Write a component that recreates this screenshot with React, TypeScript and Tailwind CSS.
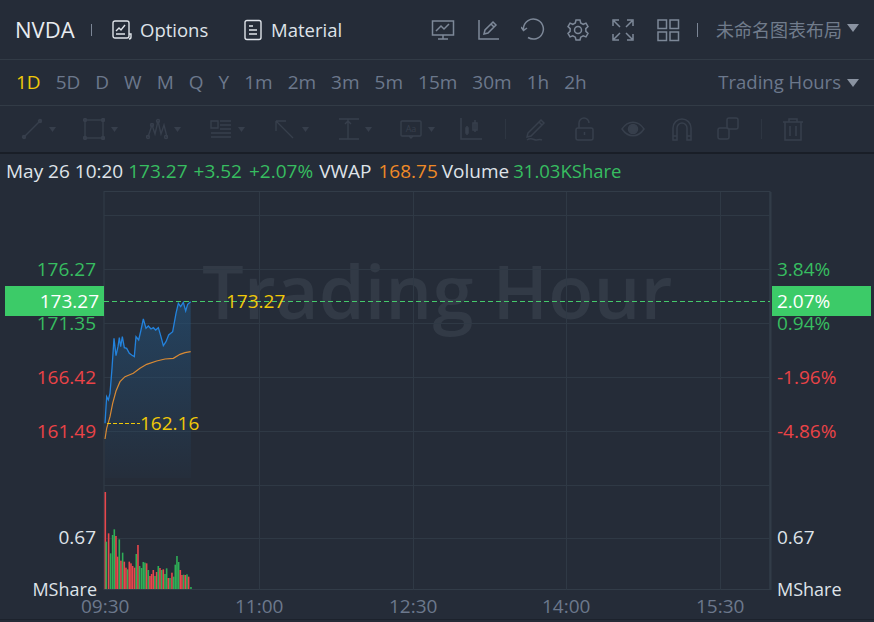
const periods = ["5D", "D", "W", "M", "Q", "Y", "1m", "2m", "3m", "5m", "15m", "30m", "1h", "2h"];

// traced from the chart, in 3x crop coordinates starting at (90, 285)
const pricePts = [[45,415],[50,335],[55,345],[60,325],[66,250],[72,160],[78,212],[84,185],[88,158],[92,185],[97,155],[103,188],[110,190],[118,205],[125,210],[133,215],[138,155],[146,165],[153,135],[160,102],[168,130],[175,123],[183,132],[190,128],[197,135],[205,128],[212,152],[220,182],[228,170],[236,150],[248,140],[258,85],[265,55],[272,65],[280,52],[287,78],[293,58],[302,50]];
const avgPts = [[45,462],[50,430],[60,395],[68,355],[78,318],[90,290],[105,275],[130,265],[150,250],[170,238],[200,228],[225,222],[250,220],[270,208],[285,203],[302,200]];

const toPage = (pts: number[][]) => pts.map(([x, y]) => `${90 + x / 3},${285 + y / 3}`).join(" ");

// [x, top, up?] in 3x crop coordinates starting at (90, 480)
const bars: [number, number, boolean][] = [[45,36,false],[48,185,true],[55,160,false],[61,220,true],[67,165,true],[72,148,true],[77,168,false],[82,230,false],[87,178,true],[92,242,false],[97,218,true],[102,245,false],[107,263,false],[112,268,true],[117,245,false],[122,250,false],[127,258,false],[133,263,false],[138,222,true],[143,195,false],[148,258,true],[154,264,true],[159,246,true],[164,248,true],[169,250,false],[174,270,true],[179,288,false],[184,282,false],[189,270,false],[194,288,true],[199,276,false],[204,258,true],[209,264,false],[214,270,true],[219,268,false],[224,282,true],[229,265,true],[234,294,false],[239,294,true],[245,278,false],[250,290,true],[255,254,true],[260,228,true],[265,246,true],[270,270,false],[275,285,false],[280,284,true],[285,285,false],[290,283,true],[295,290,false],[302,321,true]];

const hLines = [215, 269, 323, 377, 431, 485, 538];
const vLines = [259, 413, 566, 720];

const Caret = ({ className }: { className: string }) => (
  <svg width="12" height="8" viewBox="0 0 12 8" className={className}>
    <path d="M0 0h12L6 8z" fill="currentColor" />
  </svg>
);

const Tool = ({ children }: { children: React.ReactNode }) => (
  <svg width="24" height="24" viewBox="0 0 24 24" fill="none" stroke="currentColor" strokeWidth="1.5">
    {children}
  </svg>
);

const DrawTool = ({ children, className }: { children: React.ReactNode; className: string }) => (
  <div className={`flex items-center gap-1.5 ${className}`}>
    <svg width="22" height="22" viewBox="0 0 22 22" fill="none" stroke="currentColor" strokeWidth="1.4">
      {children}
    </svg>
    <svg width="7" height="5" viewBox="0 0 7 5"><path d="M0 0h7L3.5 5z" fill="currentColor" /></svg>
  </div>
);

const Muted = ({ children, className }: { children: React.ReactNode; className: string }) => (
  <svg width="22" height="24" viewBox="0 0 22 24" fill="none" stroke="currentColor" strokeWidth="1.5" className={className}>
    {children}
  </svg>
);

const AxisLabel = ({ className, children }: { className: string; children: React.ReactNode }) => (
  <span className={`absolute leading-none ${className}`}>{children}</span>
);

export default function App() {
  return (
    <div
      className="w-[874px] h-[622px] overflow-hidden bg-[#252c38] text-[19px]"
      style={{ fontFamily: '"Open Sans", "Noto Sans CJK SC", sans-serif' }}
    >
      {/* top bar */}
      <div className="h-[60px] flex items-center border-b border-[#323b46] pl-[15px] pr-[15px]">
        <span className="text-[22px] text-[#e8ebef] w-[62px]">NVDA</span>
        <div className="w-px h-3 bg-[#7c8696] ml-[14px] mr-[20px]" />
        <div className="flex items-center text-[#dfe3e9] text-[18.5px] gap-[8px] w-[131px]">
          <svg width="20" height="20" viewBox="0 0 20 20" fill="none" stroke="currentColor" strokeWidth="1.4">
            <rect x="1" y="1" width="16" height="17" rx="2" />
            <path d="M4 11l3-3 2 2 4-5M4 14h9M17 14h2v3a2 2 0 0 1-2 2" />
          </svg>
          <span>Options</span>
        </div>
        <div className="flex items-center text-[#dfe3e9] text-[18.5px] gap-[8px]">
          <svg width="20" height="22" viewBox="0 0 20 22" fill="none" stroke="currentColor" strokeWidth="1.4">
            <rect x="2" y="1.5" width="16" height="19" rx="2" />
            <path d="M6 7h4M6 11h8M6 15h8" />
          </svg>
          <span>Material</span>
        </div>
        <div className="ml-auto flex items-center text-[#7d8898]">
          <div className="flex items-center gap-[21px]">
            <Tool>
              <rect x="1.5" y="3" width="21" height="14" />
              <path d="M5 13l5-5 3 3 5-5M12 17v4M7 21h10" />
            </Tool>
            <Tool>
              <path d="M3 2v19h20M8 16l1-4 8-8 3 3-8 8zM15 6l3 3" />
            </Tool>
            <Tool>
              <path d="M7 19.500A10 10 0 1 0 2.500 9.500V12M0 9l2.500 3.500L6 10" />
            </Tool>
            <Tool>
              <circle cx="12" cy="12" r="3.5" />
              <path d="M10 2h4l.7 3 2.5 1.3 2.8-1.2 2 3.5-2.2 2 .1 2.8 2.1 2-2 3.5-2.8-1.1-2.5 1.4-.7 2.8h-4l-.7-2.8-2.5-1.4-2.8 1.1-2-3.5 2.1-2 .1-2.8-2.2-2 2-3.5 2.8 1.2L9.300 5z" />
            </Tool>
            <Tool>
              <path d="M2 8V2h6M22 8V2h-6M2 16v6h6M22 16v6h-6M3 3l6 6M21 3l-6 6M3 21l6-6M21 21l-6-6" />
            </Tool>
            <Tool>
              <rect x="2" y="2" width="8.500" height="8.500" />
              <rect x="14" y="2" width="8.500" height="8.500" />
              <rect x="2" y="14" width="8.500" height="8.500" />
              <rect x="14" y="14" width="8.500" height="8.500" />
            </Tool>
          </div>
          <div className="w-px h-3.5 bg-[#7c8696] ml-[17px] mr-[18px]" />
          <span className="text-[#717c8c] text-[18px]" style={{ fontFamily: '"Noto Sans CJK SC", sans-serif' }}>未命名图表布局</span>
          <Caret className="ml-[5px] mb-[4px] text-[#8a93a1]" />
        </div>
      </div>

      {/* periods */}
      <div className="h-[46px] flex items-center border-b border-[#323b46] pl-4 pr-[15px]">
        <div className="flex items-center gap-[15px] text-[#6c788c]">
          <span className="text-[#f0c808]">1D</span>
          {periods.map((p) => (
            <span key={p}>{p}</span>
          ))}
        </div>
        <div className="ml-auto flex items-center text-[#6c788c] text-[18.5px]">
          <span className="-mt-[2px]">Trading Hours</span>
          <Caret className="ml-[6px] text-[#8a93a1]" />
        </div>
      </div>

      {/* drawing tools, disabled */}
      <div className="h-[46px] flex items-center pl-[21px] text-[#373f4c]">
        <DrawTool className="w-[62px]">
          <path d="M3 19L19 3" /><circle cx="3" cy="19" r="1.500" fill="currentColor" /><circle cx="19" cy="3" r="1.500" fill="currentColor" />
        </DrawTool>
        <DrawTool className="w-[63px]">
          <rect x="2" y="2" width="18" height="18" /><circle cx="2" cy="2" r="1.500" fill="currentColor" /><circle cx="20" cy="2" r="1.500" fill="currentColor" /><circle cx="2" cy="20" r="1.500" fill="currentColor" /><circle cx="20" cy="20" r="1.500" fill="currentColor" />
        </DrawTool>
        <DrawTool className="w-[64px]">
          <path d="M2 19l4-12 3 9 3-13 3 13 3-9 3 12" /><circle cx="2" cy="19" r="1.500" /><circle cx="6" cy="7" r="1.500" /><circle cx="12" cy="3" r="1.500" /><circle cx="20" cy="19" r="1.500" />
        </DrawTool>
        <DrawTool className="w-[64px]">
          <path d="M10 3h11M10 7h11M10 11h11M1 15h20M1 19h20" /><path d="M1 3h7v7H1z" />
        </DrawTool>
        <DrawTool className="w-[63px]">
          <path d="M2 3h10M2 3v10M2 3l17 17" />
        </DrawTool>
        <DrawTool className="w-[63px]">
          <path d="M2 1h20M2 21h20M11 1v20M8 6l3-3 3 3" />
        </DrawTool>
        <DrawTool className="w-[60px]">
          <rect x="1" y="3" width="20" height="15" rx="1" /><path d="M9 18l2 2 2-2" />
          <text x="11" y="14" fontSize="9" textAnchor="middle" fill="currentColor" stroke="none">Aa</text>
        </DrawTool>
        <Muted className="mr-[23px]">
          <path d="M1 1v21h24M7 9v9M6 11h2v5H6zM15 3v12M13 6h4v7h-4z" />
        </Muted>
        <div className="w-px h-5 bg-[#2e3642] mr-[19px]" />
        <Muted className="mr-[27px]">
          <path d="M3 16L16 3l3 3L6 19l-4 1zM14 5l3 3M2 23c4-3 7 0 9 0s4-1 6 0" />
        </Muted>
        <Muted className="mr-[25px]">
          <rect x="2" y="11" width="17" height="12" rx="2" /><path d="M5 11V6a5 5 0 0 1 10 0M10.500 15v3" />
        </Muted>
        <svg width="24" height="16" viewBox="0 0 24 16" className="mr-[26px]" fill="none" stroke="currentColor" strokeWidth="1.5">
          <path d="M1 8c6-9 16-9 22 0-6 9-16 9-22 0z" /><circle cx="12" cy="8" r="4.500" fill="currentColor" />
        </svg>
        <Muted className="mr-[24px]">
          <path d="M2 23V11a9 9 0 0 1 18 0v12h-4V11a5 5 0 0 0-10 0v12zM2 19h4M16 19h4" />
        </Muted>
        <Muted className="mr-[22px]">
          <rect x="1" y="11" width="11" height="11" rx="2" /><rect x="10" y="1" width="11" height="11" rx="2" />
        </Muted>
        <div className="w-px h-5 bg-[#2e3642] mr-[20px]" />
        <Muted>
          <path d="M1 5h20M7 5V2h8v3M3 5v18h16V5M8 9v10M14 9v10" />
        </Muted>
      </div>

      {/* quote line */}
      <div className="h-[38px] flex items-center gap-[5px] border-t-2 border-[#191e27] pl-[6px] pb-[2px] text-[#dfe3e9] whitespace-nowrap">
        <span>May 26 10:20</span>
        <span className="text-[#37bd60]">173.27</span>
        <span className="text-[#37bd60] ml-px">+3.52</span>
        <span className="text-[#37bd60] ml-[2px]">+2.07%</span>
        <span className="ml-px">VWAP</span>
        <span className="text-[#ef8a27] ml-[2px]">168.75</span>
        <span className="-ml-px">Volume</span>
        <span className="text-[#37bd60] text-[18.5px] -ml-px">31.03KShare</span>
      </div>

      {/* chart: svg coordinates are page coordinates */}
      <div className="relative h-[432px]">
        <div className="absolute left-[202px] top-[64px] text-[74px] font-semibold leading-none text-[#323a46] whitespace-nowrap">Trading Hour</div>

        <svg width="874" height="432" viewBox="0 190 874 432" className="absolute inset-0">
          <defs>
            <linearGradient id="area" x1="0" y1="0" x2="0" y2="1">
              <stop offset="0" stopColor="#24527a" stopOpacity="0.6" />
              <stop offset="1" stopColor="#24527a" stopOpacity="0.05" />
            </linearGradient>
          </defs>
          <rect x="104" y="191.500" width="666" height="398" fill="none" stroke="#323c48" />
          <path d="M770.500 192v398" stroke="#323c48" strokeWidth="2" />
          {hLines.map((y) => (
            <path key={y} d={`M104 ${y + 0.5}H770`} stroke="#2f3945" />
          ))}
          {vLines.map((x) => (
            <path key={x} d={`M${x + 0.5} 192V590`} stroke="#2f3945" />
          ))}
          <path d="M0 619.500H874" stroke="#1c222c" />
          <polygon points={`105,478 ${toPage(pricePts)} 191,478`} fill="url(#area)" />
          <polyline points={toPage(pricePts)} fill="none" stroke="#2382dc" strokeWidth="1.300" />
          <polyline points={toPage(avgPts)} fill="none" stroke="#d98a34" strokeWidth="1.200" />
          {bars.map(([x, top, up], i) => (
            <rect
              key={i}
              x={90 + x / 3 - 0.5}
              y={480 + top / 3}
              width="1.600"
              height={(327 - top) / 3}
              fill={up ? "#2fae57" : "#e8474c"}
            />
          ))}
          <path d="M104 301.500H770" stroke="#45c96b" strokeDasharray="5 3" />
          <path d="M107 423.500H140" stroke="#f0c808" strokeDasharray="4 2" />
        </svg>

        <AxisLabel className="right-[778px] top-[70px] text-[#37bd60]">176.27</AxisLabel>
        <AxisLabel className="right-[778px] top-[124px] text-[#37bd60]">171.35</AxisLabel>
        <AxisLabel className="right-[778px] top-[178px] text-[#ea4347]">166.42</AxisLabel>
        <AxisLabel className="right-[778px] top-[232px] text-[#ea4347]">161.49</AxisLabel>
        <AxisLabel className="right-[778px] top-[338px] text-[#dfe3e9]">0.67</AxisLabel>
        <AxisLabel className="right-[777px] top-[390px] text-[18px] text-[#dfe3e9]">MShare</AxisLabel>

        <div className="absolute left-[5px] top-[96px] w-[99px] h-[30px] bg-[#3ccb68] text-white flex items-center justify-end pr-[5px]">173.27</div>
        <AxisLabel className="left-[226px] top-[102px] text-[#f0c808]">173.27</AxisLabel>
        <AxisLabel className="left-[140px] top-[224px] text-[#f0c808]">162.16</AxisLabel>

        <AxisLabel className="left-[777px] top-[70px] text-[#37bd60]">3.84%</AxisLabel>
        <AxisLabel className="left-[777px] top-[124px] text-[#37bd60]">0.94%</AxisLabel>
        <AxisLabel className="left-[777px] top-[178px] text-[#ea4347]">-1.96%</AxisLabel>
        <AxisLabel className="left-[777px] top-[232px] text-[#ea4347]">-4.86%</AxisLabel>
        <AxisLabel className="left-[777px] top-[338px] text-[#dfe3e9]">0.67</AxisLabel>
        <AxisLabel className="left-[777px] top-[390px] text-[18px] text-[#dfe3e9]">MShare</AxisLabel>
        <div className="absolute left-[772px] top-[96px] w-[99px] h-[30px] bg-[#3ccb68] text-white flex items-center pl-[5px]">2.07%</div>

        <AxisLabel className="left-[81px] top-[407px] text-[#6c788c]">09:30</AxisLabel>
        <AxisLabel className="left-[235px] top-[407px] text-[#6c788c]">11:00</AxisLabel>
        <AxisLabel className="left-[389px] top-[407px] text-[#6c788c]">12:30</AxisLabel>
        <AxisLabel className="left-[542px] top-[407px] text-[#6c788c]">14:00</AxisLabel>
        <AxisLabel className="left-[696px] top-[407px] text-[#6c788c]">15:30</AxisLabel>
      </div>
    </div>
  );
}
